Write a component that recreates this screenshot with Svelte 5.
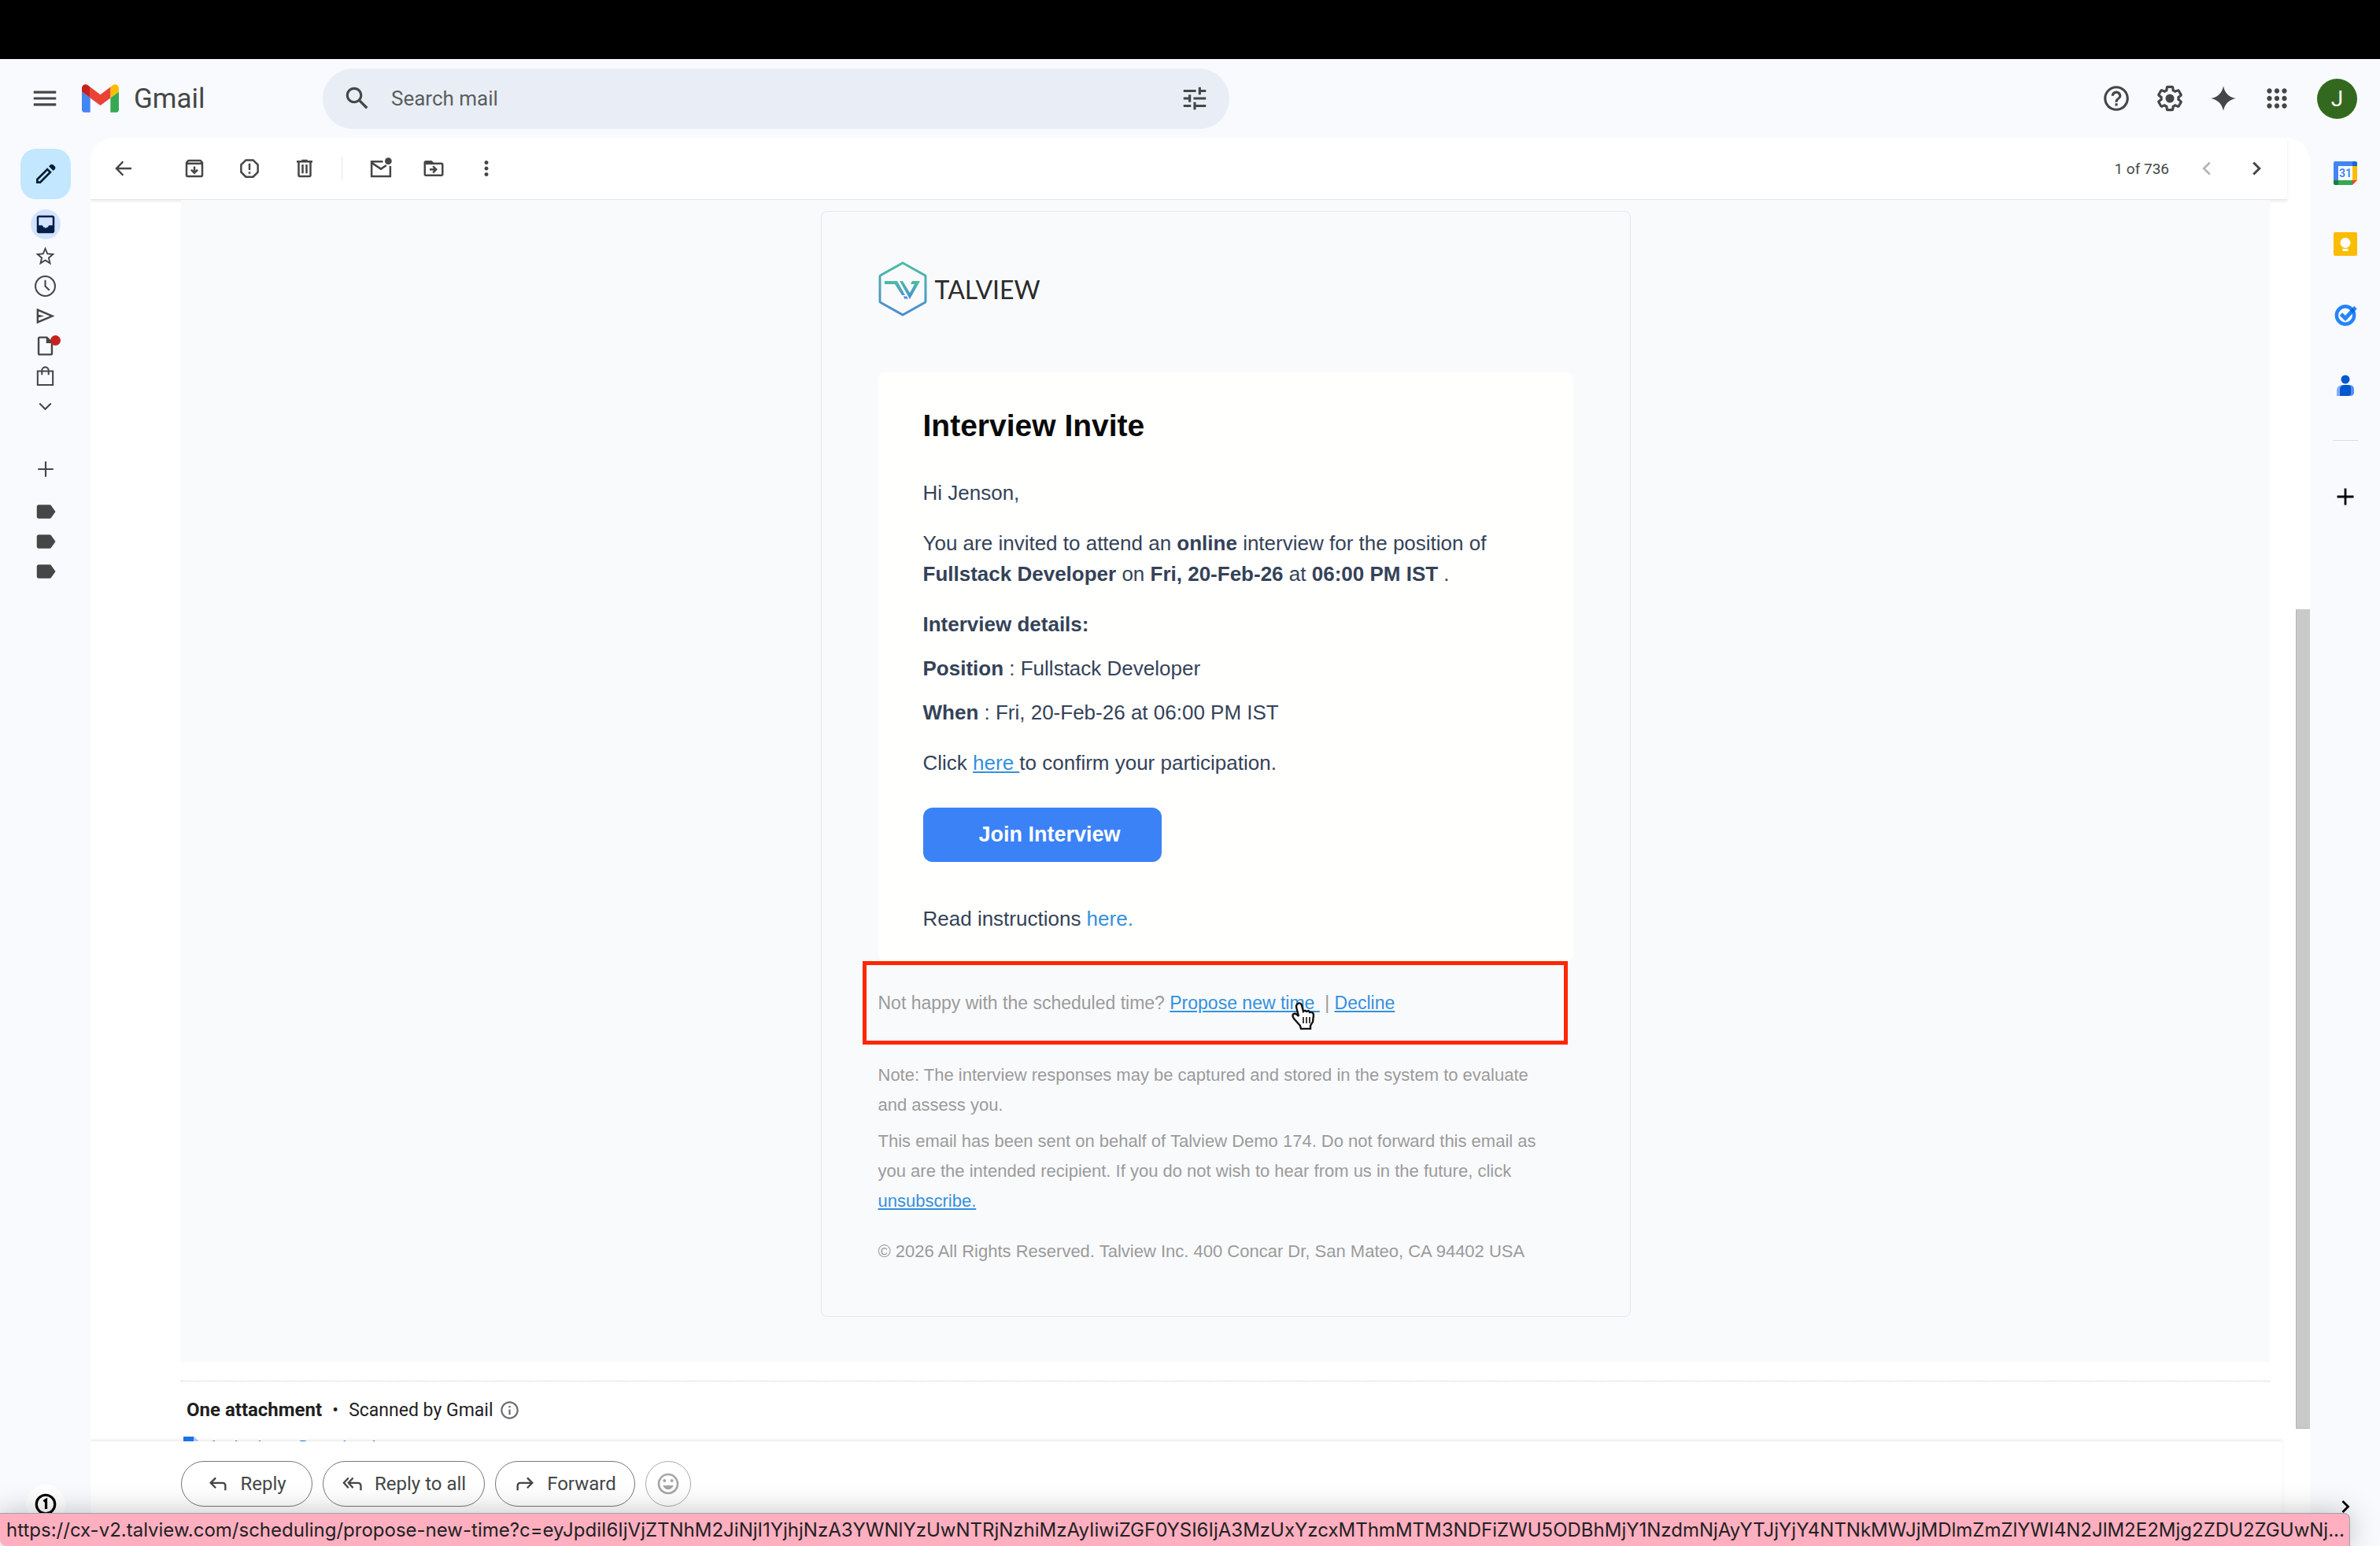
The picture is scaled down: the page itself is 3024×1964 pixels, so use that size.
<script>
  const icons = {
    menu: 'M3 18h18v-2H3v2zm0-5h18v-2H3v2zm0-7v2h18V6H3z',
    search: 'M20.49 19l-5.73-5.73C15.53 12.2 16 10.91 16 9.5 16 5.91 13.09 3 9.5 3S3 5.91 3 9.5 5.91 16 9.5 16c1.41 0 2.7-.47 3.77-1.24L19 20.49 20.49 19zM5 9.5C5 7.01 7.01 5 9.5 5S14 7.01 14 9.5 11.99 14 9.5 14 5 11.99 5 9.5z',
    tune: 'M3 17v2h6v-2H3zM3 5v2h10V5H3zm10 16v-2h8v-2h-8v-2h-2v6h2zM7 9v2H3v2h4v2h2V9H7zm14 4v-2H11v2h10zm-6-4h2V7h4V5h-4V3h-2v6z',
    help: 'M11 18h2v-2h-2v2zm1-16C6.48 2 2 6.48 2 12s4.48 10 10 10 10-4.48 10-10S17.52 2 12 2zm0 18c-4.41 0-8-3.59-8-8s3.59-8 8-8 8 3.59 8 8-3.59 8-8 8zm0-14c-2.21 0-4 1.79-4 4h2c0-1.1.9-2 2-2s2 .9 2 2c0 2-3 1.75-3 5h2c0-2.25 3-2.5 3-5 0-2.21-1.79-4-4-4z',
    settings: 'M13.85 22.25h-3.7c-.74 0-1.36-.54-1.45-1.27l-.27-1.89c-.27-.14-.53-.29-.79-.46l-1.8.72c-.7.26-1.47-.03-1.81-.65L2.2 15.53c-.35-.66-.2-1.44.36-1.88l1.53-1.19c-.01-.15-.02-.3-.02-.46 0-.15.01-.31.02-.46l-1.52-1.19c-.59-.45-.74-1.26-.37-1.88l1.85-3.19c.34-.62 1.11-.9 1.79-.63l1.81.73c.26-.17.52-.32.78-.46l.27-1.91c.09-.7.71-1.25 1.44-1.25h3.7c.74 0 1.36.54 1.45 1.27l.27 1.89c.27.14.53.29.79.46l1.8-.72c.71-.26 1.48.03 1.82.65l1.84 3.18c.36.66.2 1.44-.36 1.88l-1.52 1.19c.01.15.02.3.02.46s-.01.31-.02.46l1.52 1.19c.56.45.72 1.23.37 1.86l-1.86 3.22c-.34.62-1.11.9-1.8.63l-1.8-.72c-.26.17-.52.32-.78.46l-.27 1.91c-.1.68-.72 1.22-1.46 1.22zm-3.23-2h2.76l.37-2.55.53-.22c.44-.18.88-.44 1.34-.78l.45-.34 2.38.96 1.38-2.4-2.03-1.58.07-.56c.03-.26.06-.51.06-.78s-.03-.53-.06-.78l-.07-.56 2.03-1.58-1.39-2.4-2.39.96-.45-.35c-.42-.32-.87-.58-1.33-.77l-.52-.22-.37-2.55h-2.76l-.37 2.55-.53.21c-.44.19-.88.44-1.34.79l-.45.33-2.38-.95-1.39 2.39 2.03 1.58-.07.56a7 7 0 0 0-.06.79c0 .26.02.53.06.78l.07.56-2.03 1.58 1.38 2.4 2.39-.96.45.35c.43.33.86.58 1.33.77l.53.22.38 2.55zM12 8.5a3.5 3.5 0 1 0 0 7 3.5 3.5 0 0 0 0-7z',
    spark: 'M12 2C13 7.5 16.5 11 22 12 16.5 13 13 16.5 12 22 11 16.5 7.5 13 2 12 7.5 11 11 7.5 12 2z',
    apps: 'M6 8c1.1 0 2-.9 2-2s-.9-2-2-2-2 .9-2 2 .9 2 2 2zm6 12c1.1 0 2-.9 2-2s-.9-2-2-2-2 .9-2 2 .9 2 2 2zm-6 0c1.1 0 2-.9 2-2s-.9-2-2-2-2 .9-2 2 .9 2 2 2zm0-6c1.1 0 2-.9 2-2s-.9-2-2-2-2 .9-2 2 .9 2 2 2zm6 0c1.1 0 2-.9 2-2s-.9-2-2-2-2 .9-2 2 .9 2 2 2zm4-8c0 1.1.9 2 2 2s2-.9 2-2-.9-2-2-2-2 .9-2 2zm-4 2c1.1 0 2-.9 2-2s-.9-2-2-2-2 .9-2 2 .9 2 2 2zm6 6c1.1 0 2-.9 2-2s-.9-2-2-2-2 .9-2 2 .9 2 2 2zm0 6c1.1 0 2-.9 2-2s-.9-2-2-2-2 .9-2 2 .9 2 2 2z',
    pencil: 'M5 19h1.4l8.625-8.625-1.4-1.4L5 17.6zM19.3 8.925l-4.25-4.2 1.4-1.4q.575-.575 1.413-.575t1.412.575l1.4 1.4q.575.575.6 1.388t-.55 1.387zM17.85 10.4 7.25 21H3v-4.25l10.6-10.6z',
    archive: 'M5 21q-.825 0-1.413-.587T3 19V6.525q0-.35.113-.675t.337-.6L4.7 3.725q.275-.35.687-.538T6.25 3h11.5q.45 0 .863.188t.687.537l1.25 1.525q.225.275.338.6t.112.675V19q0 .825-.588 1.413T19 21zm.4-15h13.2l-.85-1H6.25zM5 19h14V8H5zm7-1 4-4-1.4-1.4-1.6 1.6V10h-2v4.2l-1.6-1.6L8 14z',
    trash: 'M9 3v1H4v2h1v13c0 1.1.9 2 2 2h10c1.1 0 2-.9 2-2V6h1V4h-5V3H9zM7 6h10v13H7V6zm2 2v9h2V8H9zm4 0v9h2V8h-2z',
    folder: 'M20 6h-8l-2-2H4c-1.1 0-2 .9-2 2v12c0 1.1.9 2 2 2h16c1.1 0 2-.9 2-2V8c0-1.1-.9-2-2-2zm0 12H4V8h16v10zm-8-1 4-4-4-4-1.4 1.4 1.6 1.6H8v2h4.2l-1.6 1.6L12 17z',
    more: 'M12 8c1.1 0 2-.9 2-2s-.9-2-2-2-2 .9-2 2 .9 2 2 2zm0 2c-1.1 0-2 .9-2 2s.9 2 2 2 2-.9 2-2-.9-2-2-2zm0 6c-1.1 0-2 .9-2 2s.9 2 2 2 2-.9 2-2-.9-2-2-2z',
    inbox: 'M19 3H5c-1.1 0-2 .9-2 2v14c0 1.1.9 2 2 2h14c1.1 0 2-.9 2-2V5c0-1.1-.9-2-2-2zm0 10h-3.5l-1.5 2h-.8L12 16l-1.2-1H10l-1.500-2H5V5h14z',
    star: 'M22 9.24l-7.19-.62L12 2 9.19 8.63 2 9.24l5.46 4.73L5.82 21 12 17.27 18.18 21l-1.63-7.03L22 9.24zM12 15.4l-3.76 2.27 1-4.28-3.32-2.88 4.38-.38L12 6.1l1.71 4.04 4.38.38-3.32 2.88 1 4.28L12 15.4z',
    label: 'M17.63 5.84C17.27 5.33 16.67 5 16 5L5 5.01C3.9 5.01 3 5.9 3 7v10c0 1.1.9 1.99 2 1.99L16 19c.67 0 1.27-.33 1.63-.84L22 12l-4.37-6.16z',
    info: 'M11 7h2v2h-2V7zm0 4h2v6h-2v-6zm1-9C6.48 2 2 6.48 2 12s4.48 10 10 10 10-4.48 10-10S17.52 2 12 2zm0 18c-4.41 0-8-3.59-8-8s3.59-8 8-8 8 3.59 8 8-3.59 8-8 8z',
    smile: 'M12 2C6.48 2 2 6.48 2 12s4.48 10 10 10 10-4.48 10-10S17.52 2 12 2zm0 18c-4.41 0-8-3.59-8-8s3.59-8 8-8 8 3.59 8 8-3.59 8-8 8zM8.5 7.5a1.5 1.5 0 1 0 0 3 1.5 1.5 0 0 0 0-3zm7 0a1.5 1.5 0 1 0 0 3 1.5 1.5 0 0 0 0-3zM7 13.5c.8 2.4 2.7 4 5 4s4.2-1.6 5-4z',
    send: 'M3 20V4l19 8zm2-3 11.85-5L5 7v3.5l6 1.5-6 1.5z',
    draft: 'M6 2c-1.1 0-2 .9-2 2v16c0 1.1.9 2 2 2h12c1.1 0 2-.9 2-2V8l-6-6H6zm0 18V4h7v5h5v11H6z'
  }

  // drawn as outlines rather than filled shapes
  const lines = {
    back: 'M20 12H5M11.5 5L4.8 12l6.7 7',
    spam: 'M8.3 3.5h7.4l4.8 4.8v7.4l-4.8 4.8H8.3l-4.8-4.8V8.3zM12 7v6.5M12 15.3v2',
    clock: 'M12 1.7a10.3 10.3 0 1 0 0 20.6 10.3 10.3 0 0 0 0-20.6zM12 5.5V12l4.3 4.3',
    bag: 'M4 7h16v14.5H4zM8.5 11V6.3a3.5 3.5 0 0 1 7 0V11',
    down: 'M6 9.5l6 6 6-6',
    left: 'M15 6l-6 6 6 6',
    right: 'M9 6l6 6-6 6',
    plus: 'M12 3v18M3 12h18',
    reply: 'M9.5 5.5L4 11l5.5 5.5M4.5 11H17q3 0 3 3v5',
    replyAll: 'M12.5 5.5L7.5 11l5 5.5M7.5 5.5L2.5 11l5 5.5M8 11h9.5q3.5 0 3.5 3.5V19',
    forward: 'M14.5 5.5L20 11l-5.5 5.5M19.5 11H7q-3 0-3 3v5',
    one: 'M12 3.2a8.8 8.8 0 1 0 0 17.6 8.8 8.8 0 0 0 0-17.6zM10 9.2l2.4-1.5V16.5'
  }

  const mailActions = [
    { name: 'Archive', icon: 'archive' },
    { name: 'Report spam', icon: 'spam' },
    { name: 'Delete', icon: 'trash' }
  ]

  const folders = [
    { name: 'Starred', icon: 'star' },
    { name: 'Snoozed', icon: 'clock' },
    { name: 'Sent', icon: 'send' },
    { name: 'Drafts', icon: 'draft', dot: true },
    { name: 'Purchases', icon: 'bag' },
    { name: 'More', icon: 'down' }
  ]

  const labels = ['Label one', 'Label two', 'Label three']

  const replies = [
    { text: 'Reply', icon: 'reply' },
    { text: 'Reply to all', icon: 'replyAll' },
    { text: 'Forward', icon: 'forward' }
  ]

  const hoverUrl = 'https://cx-v2.talview.com/scheduling/propose-new-time?c=eyJpdiI6IjVjZTNhM2JiNjI1YjhjNzA3YWNlYzUwNTRjNzhiMzAyIiwiZGF0YSI6IjA3MzUxYzcxMThmMTM3NDFiZWU5ODBhMjY1NzdmNjAyYTJjYjY4NTNkMWJjMDlmZmZlYWI4N2JlM2E2Mjg2ZDU2ZGUwNj...'
</script>

{#snippet icon(name, size, weight = 2)}
  <svg width={size} height={size} viewBox="0 0 24 24" aria-hidden="true">
    {#if icons[name]}
      <path d={icons[name]} fill="currentColor" fill-rule="evenodd" />
    {:else}
      <path d={lines[name]} fill="none" stroke="currentColor" stroke-width={weight} />
    {/if}
  </svg>
{/snippet}

<div class="screen">
  <div class="notch"></div>

  <header>
    <div class="brand">
      <button class="menu" aria-label="Main menu">{@render icon('menu', 38)}</button>
      <a href="#inbox" class="logo">
        <svg width="47" height="36" viewBox="52 42 88 66" aria-hidden="true">
          <path fill="#4285f4" d="M58 108h14V74L52 59v43c0 3.32 2.69 6 6 6" />
          <path fill="#34a853" d="M120 108h14c3.32 0 6-2.69 6-6V59l-20 15" />
          <path fill="#fbbc04" d="M120 48v26l20-15v-8c0-7.42-8.47-11.65-14.4-7.2" />
          <path fill="#ea4335" d="M72 74V48l24 18 24-18v26L96 92" />
          <path fill="#c5221f" d="M52 51v8l20 15V48l-5.6-4.2c-5.94-4.45-14.4-.22-14.4 7.2" />
        </svg>
        <span>Gmail</span>
      </a>
    </div>
    <form class="search">
      <button type="button" aria-label="Search">{@render icon('search', 38)}</button>
      <input type="text" placeholder="Search mail" aria-label="Search mail" />
      <button type="button" aria-label="Search options">{@render icon('tune', 38)}</button>
    </form>
    <div class="tools">
      <button aria-label="Support">{@render icon('help', 38)}</button>
      <button aria-label="Settings">{@render icon('settings', 38)}</button>
      <button aria-label="Gemini">{@render icon('spark', 38)}</button>
      <button aria-label="Apps">{@render icon('apps', 38)}</button>
      <button class="avatar" aria-label="Account">J</button>
    </div>
  </header>

  <div class="body">
    <nav class="rail">
      <button class="compose" aria-label="Compose">{@render icon('pencil', 32)}</button>
      <a class="item inbox" href="#inbox" aria-label="Inbox">{@render icon('inbox', 30)}</a>
      {#each folders as folder}
        <a class="item" href="#{folder.icon}" aria-label={folder.name}>
          {@render icon(folder.icon, 29, 1.7)}
          {#if folder.dot}<i class="dot"></i>{/if}
        </a>
      {/each}
      <button class="item add" aria-label="Create label">{@render icon('plus', 26)}</button>
      {#each labels as label}
        <a class="item" href="#label" aria-label={label}>{@render icon('label', 30)}</a>
      {/each}
      <button class="badge" aria-label="Notifications">{@render icon('one', 32, 2.4)}</button>
    </nav>

    <main>
      <div class="toolbar">
        <button aria-label="Back">{@render icon('back', 30)}</button>
        <div class="group">
          {#each mailActions as action}
            <button aria-label={action.name}>{@render icon(action.icon, 30)}</button>
          {/each}
        </div>
        <div class="group second">
          <button aria-label="Mark as unread">
            <svg width="30" height="30" viewBox="0 0 24 24" aria-hidden="true">
              <path d="M14 5H2.5v15h19V9.5M3 6.5l9 6 5.5-3.7" fill="none" stroke="currentColor" stroke-width="2" />
              <circle cx="19.5" cy="4.5" r="3.5" fill="currentColor" />
            </svg>
          </button>
          <button aria-label="Move to">{@render icon('folder', 30)}</button>
          <button aria-label="More">{@render icon('more', 30)}</button>
        </div>
        <div class="pager">
          <span>1 of 736</span>
          <button aria-label="Newer" disabled>{@render icon('left', 30, 2.2)}</button>
          <button aria-label="Older">{@render icon('right', 30, 2.4)}</button>
        </div>
      </div>

      <div class="scroll">
        <div class="mail">
          <article>
            <div class="talview">
              <svg width="62" height="70" viewBox="0 0 62 70" aria-hidden="true">
                <defs>
                  <linearGradient id="tv" gradientUnits="userSpaceOnUse" x1="0" y1="0" x2="0" y2="70">
                    <stop offset="0" stop-color="#4bbf9f" />
                    <stop offset="1" stop-color="#4c8ad6" />
                  </linearGradient>
                  <linearGradient id="tvInner" gradientUnits="userSpaceOnUse" x1="0" y1="24" x2="0" y2="48">
                    <stop offset="0" stop-color="#4bbf9f" />
                    <stop offset="1" stop-color="#4c8ad6" />
                  </linearGradient>
                </defs>
                <path d="M31 2L59.5 18Q60 18.5 60 19V51Q60 51.5 59.5 52L31 68 2.5 52Q2 51.5 2 51V19Q2 18.5 2.5 18z" fill="none" stroke="url(#tv)" stroke-width="3" />
                <path d="M8 25h16l10 18h-4L21 29H8zM27 25h4l9 15 6-11h-5l2-4h10L40 48zM32 44.5h4l2 3h-5z" fill="url(#tvInner)" />
              </svg>
              <span>TALVIEW</span>
            </div>

            <section>
              <h1>Interview Invite</h1>
              <p>Hi Jenson,</p>
              <p>You are invited to attend an <b>online</b> interview for the position of <b>Fullstack Developer</b> on <b>Fri, 20-Feb-26</b> at <b>06:00 PM IST</b> .</p>
              <p class="close"><b>Interview details:</b></p>
              <p class="close"><b>Position</b> : Fullstack Developer</p>
              <p><b>When</b> : Fri, 20-Feb-26 at 06:00 PM IST</p>
              <p>Click <a href="#confirm">here&nbsp;</a>to confirm your participation.</p>
              <a class="join" href="#join">Join Interview</a>
              <p>Read instructions <a class="plain" href="#instructions">here.</a></p>
            </section>

            <div class="highlight">
              <span>Not happy with the scheduled time? <a href="#propose">Propose new time&nbsp;</a> | <a href="#decline">Decline</a></span>
              <svg class="cursor" width="32" height="36" viewBox="0 0 32 36" aria-hidden="true">
                <path d="M9 3q3-2 5 2l2 8q2-2 4 0 3-2 4 1 5-1 5 4l-1 8-3 5v4H13l-1-4-8-9q-3-5 0-6 3-1 6 3L7 7q0-3 2-4z" fill="#fff" stroke="#111" stroke-width="2.4" />
                <path d="M16 20v8M20 20v8M24 20v8" stroke="#111" stroke-width="1.6" />
              </svg>
            </div>

            <footer>
              <p class="tight">Note: The interview responses may be captured and stored in the system to evaluate and assess you.</p>
              <p>This email has been sent on behalf of Talview Demo 174. Do not forward this email as you are the intended recipient. If you do not wish to hear from us in the future, click <a href="#unsubscribe">unsubscribe.</a></p>
              <p>© 2026 All Rights Reserved. Talview Inc. 400 Concar Dr, San Mateo, CA 94402 USA</p>
            </footer>
          </article>
        </div>

        <div class="attachments">
          <div class="summary"><b>One attachment</b><span class="bullet">•</span><span>Scanned by Gmail</span>{@render icon('info', 27)}</div>
          <div class="file">
            <svg width="20" height="24" viewBox="0 0 20 24" aria-hidden="true">
              <path d="M0 0h13l7 7v17H0z" fill="#1a73e8" />
              <path d="M13 0l7 7h-7z" fill="#a8c7fa" />
            </svg>
            <span>invite.ics</span>
            <a href="#download">Download</a>
          </div>
        </div>
        <div class="thumb"></div>
      </div>

      <div class="reply-bar">
        {#each replies as reply}
          <button>{@render icon(reply.icon, 28)}{reply.text}</button>
        {/each}
        <button class="emoji" aria-label="Add reaction">{@render icon('smile', 32)}</button>
      </div>
    </main>

    <aside>
      <a href="#calendar" aria-label="Calendar">
        <svg width="30" height="30" viewBox="0 0 30 30">
          <path d="M2 0h22v6H6v18H0V2q0-2 2-2z" fill="#4285f4" />
          <path d="M24 0h4q2 0 2 2v4h-6z" fill="#1967d2" />
          <path d="M24 6h6v18h-6z" fill="#fbbc04" />
          <path d="M6 24h18v6H6z" fill="#34a853" />
          <path d="M0 24h6v6H2q-2 0-2-2z" fill="#188038" />
          <path d="M24 24h6l-6 6z" fill="#ea4335" />
          <path d="M6 6h18v18H6z" fill="#fff" />
          <text x="15" y="20" text-anchor="middle" class="day">31</text>
        </svg>
      </a>
      <a href="#keep" aria-label="Keep">
        <svg width="30" height="30" viewBox="0 0 30 30">
          <rect width="30" height="30" rx="2" fill="#fbbc04" />
          <circle cx="15" cy="13.5" r="6.5" fill="#fff" />
          <path d="M11.5 15h7v4h-7zM11.5 21h7v3h-7z" fill="#fff" />
        </svg>
      </a>
      <a href="#tasks" aria-label="Tasks">
        <svg width="30" height="30" viewBox="0 0 30 30">
          <circle cx="15" cy="15.5" r="11.2" fill="none" stroke="#2684fc" stroke-width="4.4" />
          <path d="M9.5 14l5.5 5.5L28 5.5" fill="none" stroke="#2684fc" stroke-width="5" />
          <path d="M21 9.5l3-3.5 3 4-3 3z" fill="#0066da" />
        </svg>
      </a>
      <a href="#contacts" aria-label="Contacts">
        <svg width="30" height="30" viewBox="0 0 30 30">
          <circle cx="15" cy="7" r="5.5" fill="#0057cc" />
          <path d="M4 28v-6q0-8 8-8h6v14z" fill="#86a9ff" />
          <path d="M12 14h8q6 0 6 6v3q0 5-5 5h-9z" fill="#578cff" />
          <path d="M14 14h4q4 0 4 4v6q0 4-4 4H8v-8q0-6 6-6z" fill="#0057cc" />
        </svg>
      </a>
      <hr />
      <button aria-label="Get add-ons">{@render icon('plus', 28, 2.4)}</button>
      <button class="hide" aria-label="Hide side panel">{@render icon('right', 28, 2.4)}</button>
    </aside>
  </div>

  <div class="status">{hoverUrl}</div>
</div>

<style>
  :global(body) {
    margin: 0;
  }

  .screen {
    position: relative;
    display: flex;
    flex-direction: column;
    height: 100vh;
    overflow: hidden;
    background: #f8fafe;
    color: #444746;
    font-family: Roboto, sans-serif;
  }

  svg {
    display: block;
    flex: none;
  }

  button {
    display: flex;
    align-items: center;
    justify-content: center;
    padding: 0;
    border: 0;
    background: none;
    color: inherit;
    font: inherit;
  }

  .notch {
    flex: none;
    height: 75px;
    background: #000;
  }

  header {
    display: flex;
    flex: none;
    align-items: center;
    height: 100px;
  }

  .brand {
    display: flex;
    align-items: center;
    width: 410px;
  }

  .menu {
    width: 104px;
    padding-left: 10px;
  }

  .logo {
    display: flex;
    align-items: center;
    gap: 19px;
    color: #444746;
    font-size: 35px;
    text-decoration: none;
  }

  .search {
    display: flex;
    align-items: center;
    width: 1152px;
    height: 77px;
    padding: 0 25px;
    box-sizing: border-box;
    border-radius: 39px;
    background: #e9eef6;
  }

  .search input {
    flex: 1;
    min-width: 0;
    padding: 0 24px;
    border: 0;
    background: none;
    font: 26px Roboto, sans-serif;
  }

  .search input::placeholder {
    color: #5a5e60;
    opacity: 1;
  }

  .tools {
    display: flex;
    align-items: center;
    gap: 30px;
    margin-left: auto;
    padding-right: 29px;
  }

  .avatar {
    width: 51px;
    height: 51px;
    margin-left: 2px;
    border-radius: 50%;
    background: #33691e;
    color: #fff;
    font-size: 28px;
  }

  .body {
    display: flex;
    flex: 1;
    min-height: 0;
  }

  .rail {
    display: flex;
    flex-direction: column;
    align-items: center;
    width: 115px;
    padding: 14px 0 28px;
    box-sizing: border-box;
  }

  .compose {
    width: 64px;
    height: 64px;
    margin-bottom: 13px;
    border-radius: 20px;
    background: #c2e7ff;
    color: #001d35;
  }

  .item {
    position: relative;
    display: flex;
    align-items: center;
    justify-content: center;
    width: 38px;
    height: 38px;
    color: #444746;
  }

  .inbox {
    margin-bottom: 2px;
    border-radius: 50%;
    background: #d3e3fd;
    color: #041e49;
  }

  .dot {
    position: absolute;
    top: 6px;
    right: 0;
    width: 13px;
    height: 13px;
    border-radius: 50%;
    background: #c5221f;
  }

  .add {
    margin: 43px 0 16px;
  }

  .badge {
    width: 50px;
    height: 50px;
    margin-top: auto;
    border-radius: 50%;
    background: #fff;
    color: #000;
  }

  main {
    display: flex;
    flex: 1;
    flex-direction: column;
    min-width: 0;
    overflow: hidden;
    border-radius: 30px 30px 0 0;
    background: #fff;
  }

  .toolbar {
    display: flex;
    flex: none;
    align-items: center;
    height: 78px;
    margin-right: 29px;
    padding: 0 24px 0 27px;
    border-bottom: 1px solid #e4e6e8;
    box-shadow: 0 2px 4px rgba(0, 0, 0, 0.08);
  }

  .group {
    display: flex;
    gap: 40px;
    margin-left: 60px;
  }

  .second {
    gap: 37px;
    margin-left: 32px;
    padding-left: 34px;
    border-left: 1px solid #e1e3e6;
  }

  .pager {
    display: flex;
    align-items: center;
    gap: 33px;
    margin-left: auto;
    font-size: 19px;
  }

  .pager button:disabled {
    color: #b5b6b8;
  }

  .scroll {
    position: relative;
    flex: 1;
    min-height: 0;
    padding: 0 51px 0 115px;
    overflow: hidden;
  }

  /* the scrollbar lies over the right edge of the message */
  .thumb {
    position: absolute;
    top: 33%;
    right: 0;
    bottom: 1%;
    width: 17px;
    border-left: 1px solid #b4b4b4;
    border-bottom: 1px solid #b4b4b4;
    background: #c9c9c9;
  }

  .mail {
    padding: 14px 0 57px;
    background: #f9fafc;
    font-family: 'Liberation Sans', Helvetica, Arial, sans-serif;
  }

  article {
    width: 1029px;
    margin: 0 auto;
    padding: 63px 72px;
    box-sizing: border-box;
    border: 1px solid #e0e9f2;
    border-radius: 8px;
  }

  .talview {
    display: flex;
    align-items: center;
    gap: 10px;
    margin-bottom: 71px;
    color: #2b2b2b;
    font: 32px Lato, sans-serif;
  }

  section {
    padding: 44px 57px 34px;
    border-radius: 8px;
    background: #fffffe;
    color: #344258;
    font-size: 26px;
    line-height: 39px;
  }

  h1 {
    margin: 0 0 42px;
    color: #0a0a0a;
    font-size: 39px;
    line-height: 48px;
  }

  p {
    margin: 0;
  }

  section p {
    margin-bottom: 25px;
  }

  section .close {
    margin-bottom: 17px;
  }

  section p:last-child {
    margin-bottom: 0;
  }

  article a {
    color: #3490dc;
  }

  article .plain {
    text-decoration: none;
  }

  article .join {
    display: block;
    width: fit-content;
    margin: 37px 0 53px;
    padding: 15px 52px 15px 71px;
    border-radius: 12px;
    background: #3b82f6;
    color: #fff;
    font-size: 27px;
    font-weight: bold;
    text-decoration: none;
  }

  .highlight {
    position: relative;
    display: flex;
    align-items: center;
    height: 96px;
    margin: 0 7px 20px -20px;
    padding-left: 15px;
    border: 5px solid #ff2600;
    color: #9b9b9b;
    font-size: 23px;
  }

  .cursor {
    position: absolute;
    top: 46px;
    left: 539px;
  }

  footer {
    padding-right: 16px;
    color: #9b9b9b;
    font-size: 22px;
    line-height: 38px;
  }

  footer p {
    margin-bottom: 26px;
  }

  footer .tight {
    margin-bottom: 8px;
  }

  footer p:last-child {
    margin-bottom: 0;
  }

  .attachments {
    margin-top: 24px;
    padding-top: 22px;
    border-top: 1px dotted #c4c7c9;
    color: #1f1f1f;
    font-size: 23px;
  }

  .summary {
    display: flex;
    align-items: center;
    height: 28px;
    margin-left: 7px;
  }

  .summary b {
    font-size: 24px;
  }

  .summary svg {
    margin-left: 7px;
    color: #6b6e74;
  }

  .bullet {
    width: 34px;
    text-align: center;
  }

  .file {
    display: flex;
    align-items: flex-start;
    margin: 20px 0 0 3px;
    color: #5f6368;
    font-size: 22px;
    line-height: 28px;
  }

  .file span {
    margin-left: 16px;
  }

  .file a {
    margin-left: 24px;
    color: #1a73e8;
    text-decoration: none;
  }

  .reply-bar {
    display: flex;
    flex: none;
    gap: 13px;
    align-items: flex-start;
    height: 108px;
    margin-right: 35px;
    padding: 25px 0 0 115px;
    box-shadow: 0 -2px 3px rgba(0, 0, 0, 0.08);
    background: #fff;
  }

  .reply-bar button {
    gap: 14px;
    min-width: 167px;
    height: 58px;
    padding: 0 23px;
    border: 1px solid #747775;
    border-radius: 29px;
    font-size: 24px;
  }

  .reply-bar .emoji {
    min-width: 58px;
    padding: 0;
    border-color: #a9abaa;
    color: #a4a6a5;
  }

  aside {
    display: flex;
    flex-direction: column;
    align-items: center;
    gap: 60px;
    width: 89px;
    padding: 30px 0 36px;
    box-sizing: border-box;
  }

  aside a {
    display: block;
  }

  aside button {
    color: #000;
  }

  .day {
    fill: #4285f4;
    font: bold 14px Roboto, sans-serif;
  }

  hr {
    width: 32px;
    margin: -6px 0 -3px;
    border: 0;
    border-top: 1px solid #dadce0;
  }

  .hide {
    margin-top: auto;
  }

  /* address of the hovered link */
  .status {
    position: absolute;
    bottom: 0;
    left: 0;
    height: 42px;
    padding: 0 6px 0 8px;
    box-sizing: border-box;
    border: solid #9da5a5;
    border-width: 1px 1px 0 0;
    border-radius: 0 8px 0 8px;
    background: #ffafbf;
    box-shadow: 0 0 36px rgba(0, 0, 0, 0.25);
    color: #202224;
    font-family: Inter, sans-serif;
    font-size: 24px;
    line-height: 42px;
    white-space: nowrap;
  }
</style>
